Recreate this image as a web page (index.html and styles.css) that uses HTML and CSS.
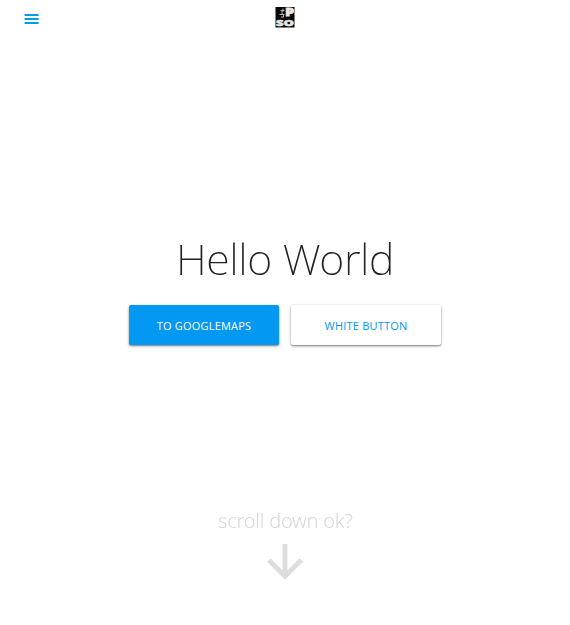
FILE: index.html
```html
<!DOCTYPE html>
<html lang="en">
<head>
<meta charset="utf-8">
<title>Hello World</title>
<link rel="stylesheet" href="styles.css">
</head>
<body>
<header class="navbar">
  <a class="menu" aria-label="Menu"><svg width="20" height="20" viewBox="0 0 20 20"><path d="M2.6 5h14v2h-14zM2.6 9h14v2h-14zM2.6 13h14v2h-14z"/></svg></a>
  <svg class="logo" width="20" height="21" viewBox="0 0 20 21">
    <rect x=".5" width="19" height="20.5" fill="#080707"/>
    <path d="M8 1.5v3M5.5 3.5h4M7 4v4M4.5 7.5h5M8.5 8v2.5M6 10h2" stroke="#bbb4b6" fill="none"/>
    <g class="logo-text"><text x="10.3" y="9" textLength="8.8" lengthAdjust="spacingAndGlyphs">P</text><text class="logo-base" x="1" y="19.2" textLength="18" lengthAdjust="spacingAndGlyphs">SO</text></g>
  </svg>
</header>
<main class="hero">
  <h1 class="title">Hello World</h1>
  <div class="actions">
    <a class="button primary">To Googlemaps</a>
    <a class="button">White Button</a>
  </div>
</main>
<footer class="scroll">
  <span class="hint">scroll down ok?</span>
  <svg class="arrow" width="36" height="36" viewBox="0 0 36 36"><path d="M18 0v32M1.7 16L18 32.3 34.3 16"/></svg>
</footer>
</body>
</html>
```

FILE: styles.css
```css
* { box-sizing: border-box; }
body {
  margin: 0;
  height: 625px;
  display: flex;
  flex-direction: column;
  overflow: hidden;
  background: #fff;
  color: #222;
  font-family: "Open Sans", "Noto Sans", sans-serif;
}
.navbar {
  height: 38px;
  display: grid;
  grid-template-columns: 1fr 20px 1fr;
  align-items: start;
}
.menu { padding: 9px 0 0 22px; height: 38px; }
.menu svg { display: block; fill: #039be5; }
.logo { display: block; margin-top: 7px; overflow: visible; }
.logo-text { font: 900 10px "Noto Sans", sans-serif; fill: #e9e6e4; stroke: #e9e6e4; stroke-width: .8; }
.logo-base { font-size: 8.5px; stroke-width: .5; }
.hero { padding-top: 191px; height: 469px; text-align: center; }
.title {
  margin: 0;
  font: 200 43px/60px "Noto Sans", sans-serif;
  letter-spacing: -.35px;
  color: #222;
  will-change: transform;
}
.actions { display: flex; justify-content: center; gap: 12px; margin-top: 16px; }
.button {
  width: 150px;
  height: 40px;
  border-radius: 2px;
  background: #fff;
  color: #0398f0;
  font-size: 11px;
  font-weight: 450;
  letter-spacing: .2px;
  line-height: 41px;
  text-transform: uppercase;
  box-shadow: 0 1px 3px rgba(0, 0, 0, .4), 0 1px 1px rgba(0, 0, 0, .2);
}
.primary { background: #0398f2; color: #fff; }
.scroll { display: flex; flex-direction: column; align-items: center; color: #d8d8d8; }
.hint { font: 300 20px/28px "Noto Sans", sans-serif; letter-spacing: -.22px; will-change: transform; }
.arrow { margin-top: 9px; fill: none; stroke: #ddd; stroke-width: 5; }
```
